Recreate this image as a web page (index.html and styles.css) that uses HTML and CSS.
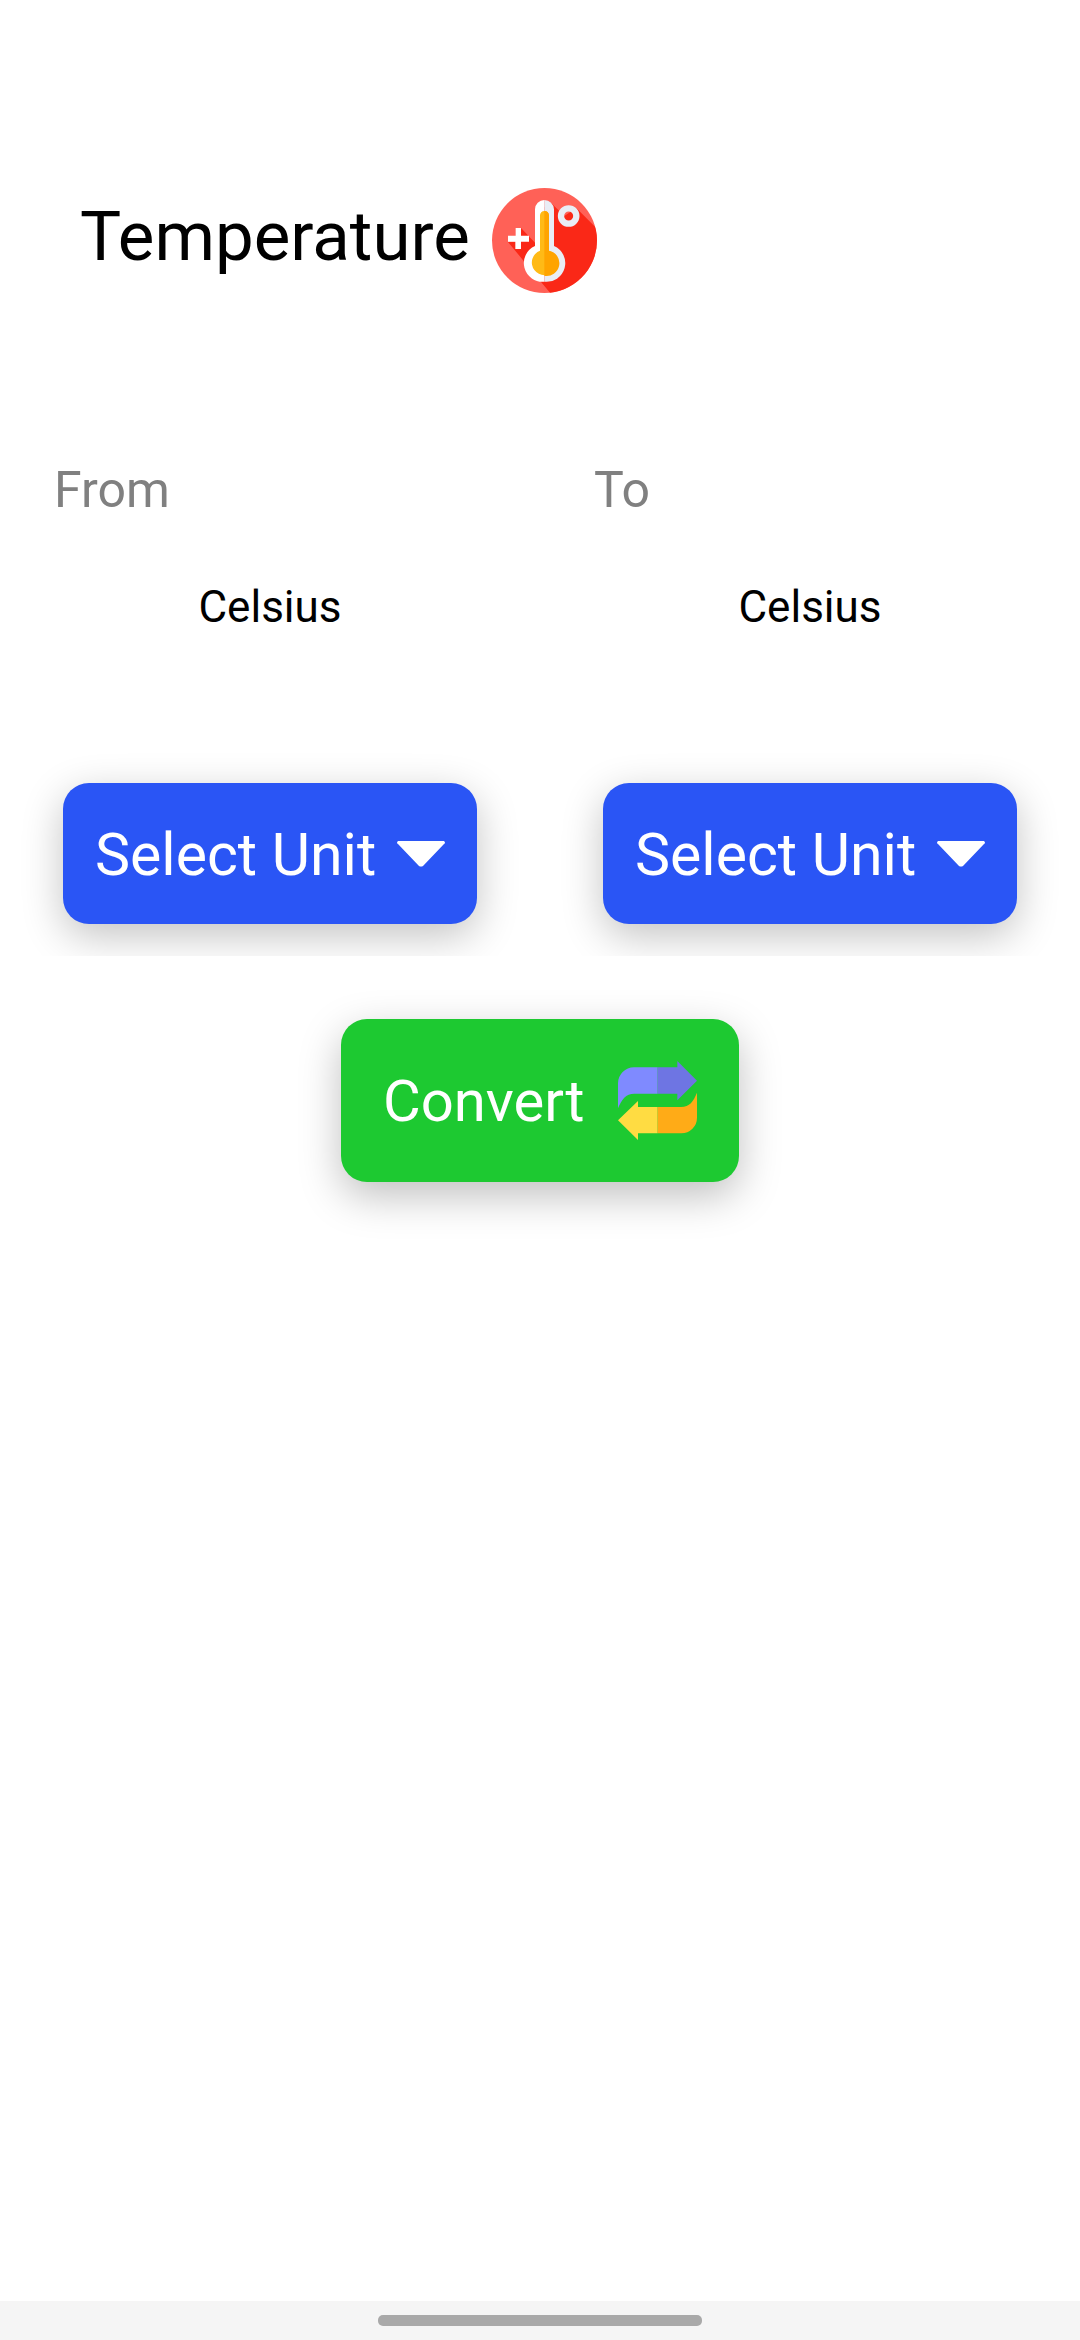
FILE: index.html
```html
<!DOCTYPE html>
<html lang="en">
<head>
<meta charset="utf-8">
<meta name="viewport" content="width=device-width, initial-scale=1">
<title>Temperature</title>
<link rel="stylesheet" href="styles.css">
</head>
<body>
<main class="screen">
  <header class="header">
    <h1 class="title">Temperature</h1>
    <svg class="title-icon" viewBox="33 24 315 315" aria-hidden="true">
      <clipPath id="disc"><circle cx="190.500" cy="181.500" r="157.500"/></clipPath>
      <g clip-path="url(#disc)">
        <path fill="#ff6157" d="M33 24h315v315H33z"/>
        <path fill="#fa2817" d="M81 186h23l16-42 42 44V100l48-32 40 40 36-24 74 74v202H225z"/>
      </g>
      <path fill="#fff" d="M104 144h16v23h24v18h-24v22h-17v-22H81v-18h23z"/>
      <path fill="#fff" d="M190 60a28 28 0 0 0-28 28v110a56 56 0 0 0 28 107z"/>
      <path fill="#e9edf5" d="M190 60a29 29 0 0 1 29 28v110a56 56 0 0 1-29 107z"/>
      <circle cx="263" cy="108" r="23" fill="none" stroke="#e9edf5" stroke-width="19"/>
      <path fill="#ffba16" d="M190 93a13 13 0 0 0-13 13v106a38 38 0 1 0 27 0V106a13 13 0 0 0-14-13z"/>
      <path fill="#ffa400" d="M190 93a14 14 0 0 1 14 13v106a38 38 0 0 1-14 75z"/>
    </svg>
  </header>

  <form class="converter">
    <div class="columns">
      <section class="column">
        <label class="label" for="from-unit">From</label>
        <output class="value">Celsius</output>
        <div class="picker">
          <select class="select" id="from-unit">
            <option selected>Select Unit</option>
            <option>Celsius</option>
            <option>Fahrenheit</option>
            <option>Kelvin</option>
          </select>
          <svg class="caret" viewBox="0 0 48 26" aria-hidden="true"><path fill="#fff" d="M1 0h46q2 2 0 3L26 25q-2 1-4 0L1 3q-2-1 0-3z"/></svg>
        </div>
      </section>
      <section class="column">
        <label class="label" for="to-unit">To</label>
        <output class="value">Celsius</output>
        <div class="picker">
          <select class="select" id="to-unit">
            <option selected>Select Unit</option>
            <option>Celsius</option>
            <option>Fahrenheit</option>
            <option>Kelvin</option>
          </select>
          <svg class="caret" viewBox="0 0 48 26" aria-hidden="true"><path fill="#fff" d="M1 0h46q2 2 0 3L26 25q-2 1-4 0L1 3q-2-1 0-3z"/></svg>
        </div>
      </section>
    </div>
    <button class="convert" type="button">Convert
      <svg class="swap" viewBox="39 33 237 237" aria-hidden="true">
        <path fill="#7f8aff" d="M39 175V100a48 48 0 0 1 48-48h71v79H88c-26 0-38 18-49 44z"/>
        <path fill="#6e75e3" d="M158 52h59V33l59 59-59 59v-20h-59z"/>
        <path fill="#ffdc42" d="M158 171H99v-18l-60 58 60 59v-20h59z"/>
        <path fill="#ffab17" d="M158 171h70c26 0 37-17 48-43v75a47 47 0 0 1-47 47h-71z"/>
      </svg>
    </button>
  </form>
</main>
<footer class="system-bar"><div class="handle"></div></footer>
</body>
</html>
```

FILE: styles.css
```css
* {
  box-sizing: border-box;
}

body {
  margin: 0;
  min-height: 100vh;
  display: flex;
  flex-direction: column;
  background: #fff;
  color: #000;
  font-family: Roboto, "Noto Sans", sans-serif;
}

.screen {
  flex: 1;
}

.header {
  display: flex;
  align-items: flex-start;
  gap: 22px;
  padding: 188px 80px 166px;
}

.title {
  margin: 0;
  font-size: 69px;
  font-weight: 400;
  line-height: 98px;
}

.title-icon {
  width: 105px;
  height: 105px;
}

.converter {
  display: flex;
  flex-direction: column;
  align-items: center;
  gap: 63px;
}

.columns {
  align-self: stretch;
  display: grid;
  grid-template-columns: 1fr 1fr;
  padding-bottom: 32px;
  overflow: hidden;
}

.column {
  display: flex;
  flex-direction: column;
  align-items: center;
}

.label {
  align-self: flex-start;
  padding-left: 54px;
  color: #808080;
  font-size: 50px;
  line-height: 62px;
}

.value {
  margin: 60px 0 150px;
  font-size: 44px;
  line-height: 52px;
}

.picker {
  display: grid;
  align-items: center;
}

.select,
.convert {
  border: 0;
  border-radius: 26px;
  color: #fff;
  font: 400 58px/70px Roboto, "Noto Sans", sans-serif;
}

.select {
  appearance: none;
  grid-area: 1 / 1;
  width: 414px;
  height: 141px;
  padding: 2px 32px 0;
  background: #2a55f5;
  box-shadow: 0 12px 42px rgba(0, 0, 0, 0.24);
  font-size: 59px;
}

.caret {
  grid-area: 1 / 1;
  justify-self: end;
  width: 48px;
  height: 26px;
  margin-right: 32px;
  pointer-events: none;
}

.convert {
  display: flex;
  align-items: center;
  justify-content: space-between;
  width: 398px;
  height: 163px;
  padding: 0 42px;
  background: #1dc931;
  box-shadow: 0 14px 42px rgba(0, 0, 0, 0.25);
}

.swap {
  width: 79px;
  height: 79px;
}

.system-bar {
  display: flex;
  justify-content: center;
  padding: 14px 0;
  background: #f5f5f5;
}

.handle {
  width: 30%;
  height: 11px;
  border-radius: 5px;
  background: #a9a9a9;
}
```
